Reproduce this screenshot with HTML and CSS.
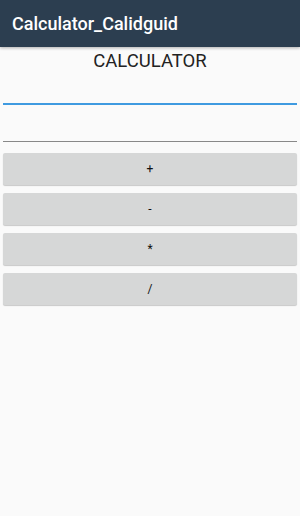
FILE: index.html
```html
<!DOCTYPE html>
<html lang="en">
<head>
  <meta charset="UTF-8">
  <meta name="viewport" content="width=device-width, initial-scale=1.0">
  <title>Calculator_Calidguid</title>
  <link rel="stylesheet" href="styles.css">
</head>
<body>
  <header class="app-bar">Calculator_Calidguid</header>

  <main class="content">
    <h1 class="heading">CALCULATOR</h1>

    <input class="field field-active" type="text">
    <input class="field" type="text">

    <div class="ops">
      <button class="op">+</button>
      <button class="op">-</button>
      <button class="op">*</button>
      <button class="op">/</button>
    </div>
  </main>
</body>
</html>
```

FILE: styles.css
```css
html, body {
  margin: 0;
  padding: 0;
}

body {
  width: 300px;
  height: 516px;
  background: #fafafa;
  font-family: Roboto, "Noto Sans", sans-serif;
  overflow: hidden;
}

.app-bar {
  height: 47px;
  background: #2c3e50;
  color: #fff;
  font-size: 18px;
  font-weight: 500;
  line-height: 48px;
  padding-left: 12px;
  box-shadow: 0 1px 3px rgba(0, 0, 0, 0.3);
}

.content {
  padding: 0 3px;
}

.heading {
  margin: 5px 0 0;
  text-align: center;
  font-size: 18.5px;
  font-weight: 400;
  line-height: 18px;
  color: #222;
}

.field {
  display: block;
  width: 100%;
  box-sizing: border-box;
  height: 37px;
  margin: 0;
  padding: 0;
  border: none;
  border-bottom: 1px solid #888;
  background: transparent;
  outline: none;
}

.field-active {
  height: 35px;
  border-bottom: 2px solid #3f9ae0;
}

.ops {
  display: flex;
  flex-direction: column;
  gap: 8px;
  margin-top: 11px;
}

.op {
  height: 32px;
  border: none;
  border-radius: 2px;
  background: #d6d7d7;
  box-shadow: 0 1px 1px rgba(0, 0, 0, 0.2);
  font-family: Roboto, sans-serif;
  font-size: 12px;
  color: #111;
  padding: 0;
}
```
